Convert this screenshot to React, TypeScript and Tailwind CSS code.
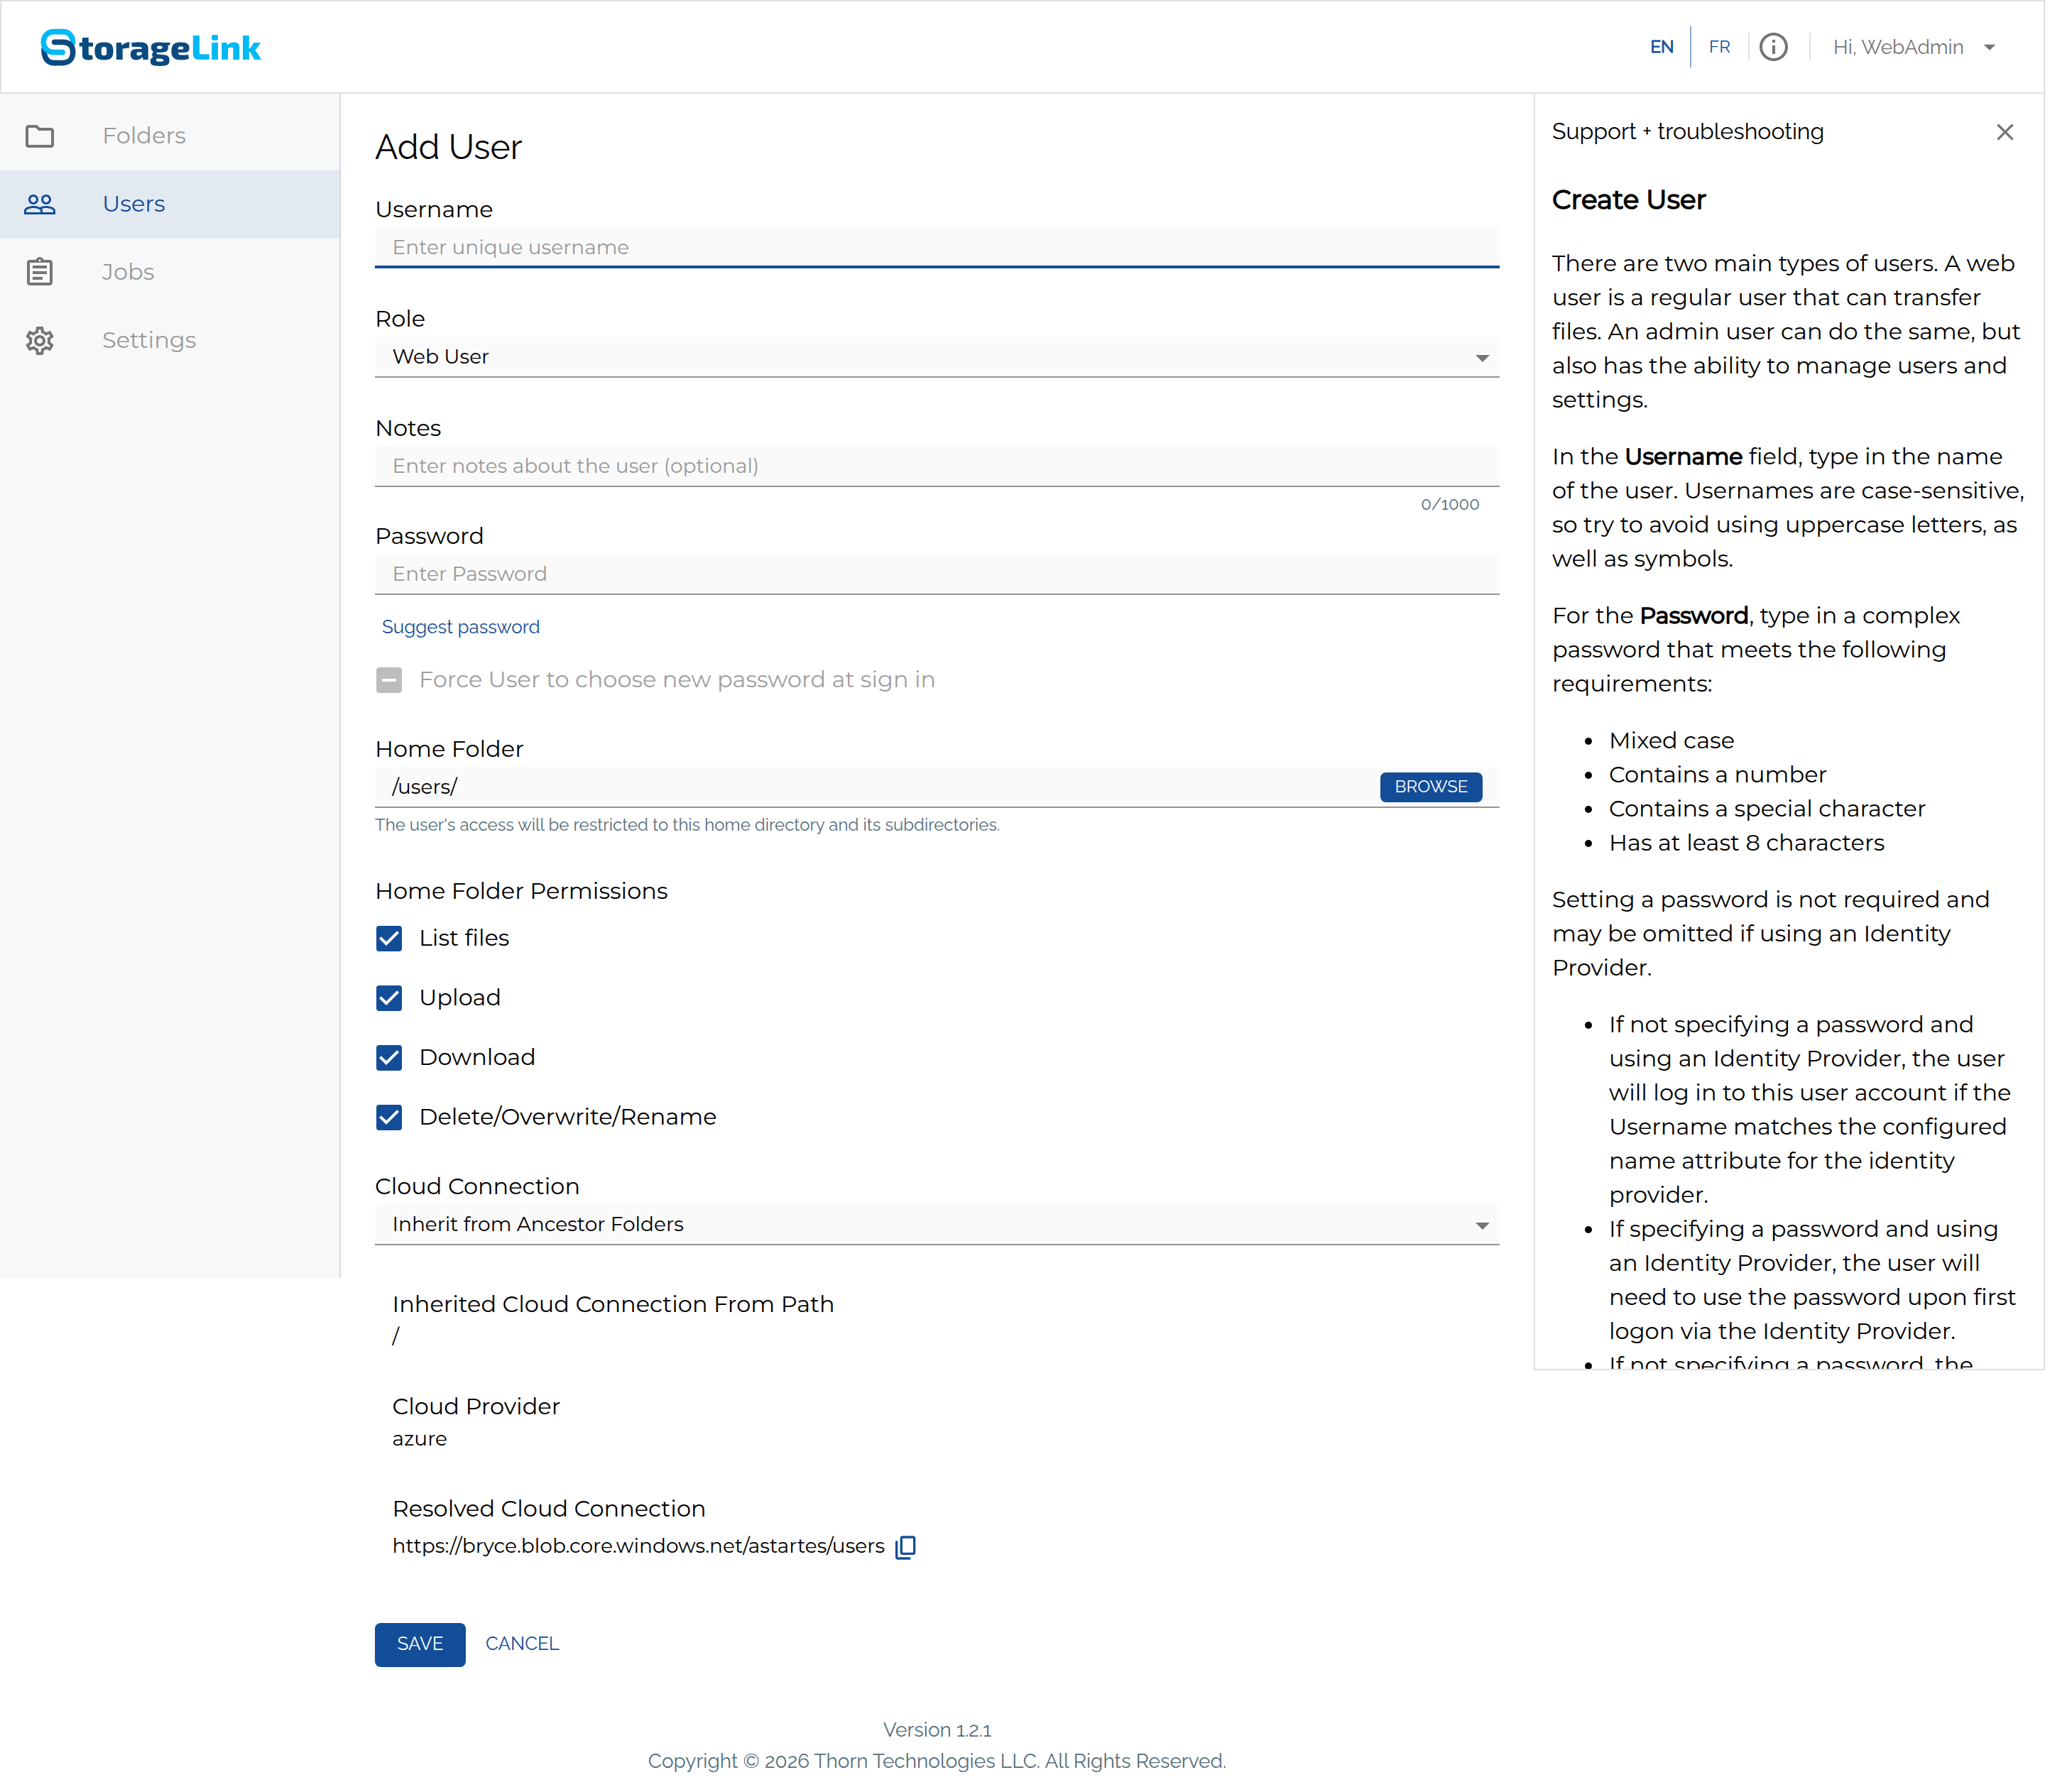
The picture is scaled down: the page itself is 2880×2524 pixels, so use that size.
import React from 'react';
import {
  MdArrowDropDown,
  MdCheckBox,
  MdClose,
  MdIndeterminateCheckBox,
  MdOutlineAssignment,
  MdOutlineFolder,
  MdOutlineInfo,
  MdOutlineSettings,
  MdPeopleOutline,
} from 'react-icons/md';

const Logo: React.FC = () => (
  <svg className="mt-0.5" width="320" height="66" viewBox="0 0 320 66" fill="none">
    <g transform="scale(0.33333)" strokeWidth="23" strokeLinecap="round">
      <path d="M80 164C52 164 36 146 36 108" stroke="#0b4a80" />
      <path
        d="M158 78C158 50 140 32 116 32H78C52 32 34 50 34 76C34 102 52 119 78 119H114"
        stroke="#00b9f5"
      />
      <path d="M80 76H116C142 76 158 92 158 118C158 146 142 164 114 164H80" stroke="#0b4a80" />
    </g>
    <text
      x="61"
      y="50"
      textLength="157"
      lengthAdjust="spacingAndGlyphs"
      className="font-['Exo_2',Inter,sans-serif] text-[48px] font-extrabold"
      fill="#0b4a80"
    >
      torage
    </text>
    <text
      x="219"
      y="50"
      textLength="99"
      lengthAdjust="spacingAndGlyphs"
      className="font-['Exo_2',Inter,sans-serif] text-[48px] font-extrabold"
      fill="#00b9f5"
    >
      Link
    </text>
  </svg>
);

const CopyIcon: React.FC = () => (
  <svg width="40" height="40" viewBox="0 -960 960 960" fill="currentColor">
    <path d="M360-240q-33 0-56.5-23.5T280-320v-480q0-33 23.5-56.5T360-880h360q33 0 56.5 23.5T800-800v480q0 33-23.5 56.5T720-240H360Zm0-80h360v-480H360v480ZM200-80q-33 0-56.5-23.5T120-160v-520q0-17 11.500-28.500T160-720q17 0 28.500 11.500T200-680v520h400q17 0 28.500 11.500T640-120q0 17-11.500 28.500T600-80H200Z" />
  </svg>
);

const Header: React.FC = () => (
  <header className="flex h-[132px] items-center justify-between border-2 border-[#e0e0e0] bg-white pl-12 pr-[56px]">
    <Logo />
    <div className="flex items-center font-['Raleway',Lato,sans-serif] text-[24px] text-[#134d98]">
      <button className="h-[58px] w-[82px] border-r-2 border-[#89a6cc] pl-0.5 [-webkit-text-stroke:1px_#134d98]">
        EN
      </button>
      <button className="h-[58px] w-20">FR</button>
      <div className="h-10 w-0.5 bg-[#e0e0e0]" />
      <MdOutlineInfo className="ml-2.5 mr-[26px] size-12 text-[#757575]" />
      <div className="h-10 w-0.5 bg-[#e0e0e0]" />
      <span className="ml-8 mt-0.5 w-[200px] text-[28px] text-[#757575]">Hi, WebAdmin</span>
      <MdArrowDropDown className="size-10 text-[#757575]" />
    </div>
  </header>
);

const navItems = [
  { label: 'Folders', icon: MdOutlineFolder },
  { label: 'Users', icon: MdPeopleOutline, active: true },
  { label: 'Jobs', icon: MdOutlineAssignment },
  { label: 'Settings', icon: MdOutlineSettings },
];

const Sidebar: React.FC = () => (
  <nav className="h-[1668px] w-[480px] shrink-0 border-r-2 border-[#d9d9d9] bg-[#f7f8fa] pt-3">
    {navItems.map(({ label, icon: Icon, active }) => (
      <div
        key={label}
        className={`flex h-24 items-center gap-16 pl-8 ${active ? 'bg-[#e3e9f1] text-[#134d98]' : 'text-[#9a9a9a]'}`}
      >
        <Icon className={`size-12 ${active ? 'text-[#134d98]' : 'text-[#757575]'}`} />
        <span className="pb-[3px]">{label}</span>
      </div>
    ))}
  </nav>
);

interface FieldProps {
  label: string;
  value?: string;
  placeholder?: string;
  focused?: boolean;
  select?: boolean;
  children?: React.ReactNode;
}

const Field: React.FC<FieldProps> = ({ label, value, placeholder, focused, select, children }) => (
  <div>
    <div className="mb-[5px] pt-px leading-10">{label}</div>
    <div
      className={`flex h-[58px] justify-between rounded-t-lg bg-[#fafafa] pl-[24.5px] text-[28px] leading-[56px] ${
        focused ? 'border-b-4 border-[#134d98]' : 'border-b-2 border-[#949494]'
      }`}
    >
      {value ? <span>{value}</span> : <span className="text-[#999999]">{placeholder}</span>}
      {select && <MdArrowDropDown className="mt-1.5 size-12 text-[#757575]" />}
      {children}
    </div>
  </div>
);

const Check: React.FC<{ label: string }> = ({ label }) => (
  <div className="-ml-1 flex h-12 items-center gap-[18px]">
    <MdCheckBox className="size-12 text-[#134d98]" />
    <span className="pb-[3px]">{label}</span>
  </div>
);

const permissions = ['List files', 'Upload', 'Download', 'Delete/Overwrite/Rename'];

const UserForm: React.FC = () => (
  <main className="w-[1680px] shrink-0 px-12 pt-[39px]">
    <h1 className="mb-[31px] font-['Raleway',Lato,sans-serif] text-[48px] leading-[72px]">Add User</h1>
    <div className="flex flex-col gap-[50px]">
      <Field label="Username" placeholder="Enter unique username" focused />
      <Field label="Role" value="Web User" select />
      <Field label="Notes" placeholder="Enter notes about the user (optional)" />
    </div>
    <div className="my-2.5 pr-7 text-right font-['Raleway',Lato,sans-serif] text-[24px] leading-7 text-[#546e7a]">
      0/1000
    </div>
    <Field label="Password" placeholder="Enter Password" />
    <button className="mt-[25px] block pl-2.5 font-['Raleway',Lato,sans-serif] text-[26px] leading-10 text-[#134d98]">
      Suggest password
    </button>
    <div className="-ml-1 mb-[52px] mt-[31px] flex h-12 items-center gap-[18px] text-[#a0a0a0]">
      <MdIndeterminateCheckBox className="size-12 text-[#bdbdbd]" />
      <span className="pb-[3px]">Force User to choose new password at sign in</span>
    </div>
    <Field label="Home Folder" value="/users/">
      <button className="mr-6 mt-2 h-[42px] w-36 rounded-lg bg-[#134d98] pb-[3px] font-['Raleway',Lato,sans-serif] text-[24px] leading-9 text-white">
        BROWSE
      </button>
    </Field>
    <p className="mt-2 font-['Raleway',Lato,sans-serif] text-[24px] leading-8 text-[#546e7a]">
      The user's access will be restricted to this home directory and its subdirectories.
    </p>
    <div className="mb-[23px] mt-[57px] leading-10">Home Folder Permissions</div>
    <div className="mb-[52px] flex flex-col gap-9">
      {permissions.map((p) => (
        <Check key={p} label={p} />
      ))}
    </div>
    <Field label="Cloud Connection" value="Inherit from Ancestor Folders" select />
    <div className="mt-[63px] flex flex-col gap-[59px] pl-[24.5px] leading-10">
      <div>
        <div className="mb-[5px]">Inherited Cloud Connection From Path</div>
        <div className="text-[28px] leading-10">/</div>
      </div>
      <div>
        <div className="mb-[5px]">Cloud Provider</div>
        <div className="text-[28px] leading-10">azure</div>
      </div>
      <div>
        <div className="mb-3">Resolved Cloud Connection</div>
        <div className="flex h-10 items-center gap-2.5 text-[28px] leading-10">
          https://bryce.blob.core.windows.net/astartes/users
          <span className="mt-1.5 text-[#134d98]">
            <CopyIcon />
          </span>
        </div>
      </div>
    </div>
    <div className="mt-[89px] flex font-['Raleway',Lato,sans-serif] text-[26px] leading-[58px]">
      <button className="h-[62px] w-32 rounded-lg bg-[#134d98] pb-1 text-white">SAVE</button>
      <button className="h-[62px] w-40 pb-1 text-[#134d98]">CANCEL</button>
    </div>
    <footer className="mt-[67px] text-center font-['Raleway',Lato,sans-serif] text-[28px] leading-[44px] text-[#546e7a]">
      <p>Version 1.2.1</p>
      <p>Copyright © 2026 Thorn Technologies LLC. All Rights Reserved.</p>
    </footer>
  </main>
);

const Bold: React.FC<{ children: React.ReactNode }> = ({ children }) => (
  <span className="[-webkit-text-stroke:1.5px_black]">{children}</span>
);

const HelpPanel: React.FC = () => (
  <aside className="h-[1798px] w-[720px] shrink-0 overflow-hidden border-2 border-t-0 border-[#e0e0e0] pl-6 pr-6 pt-[33px]">
    <div className="mb-12 flex h-10 items-center justify-between pr-2.5">
      <span className="font-['Raleway',Lato,sans-serif] leading-10">Support + troubleshooting</span>
      <MdClose className="mt-0.5 size-10 text-[#757575]" />
    </div>
    <h2 className="mb-[38px] text-[37.44px] leading-[56px]">
      <Bold>Create User</Bold>
    </h2>
    <div className="flex flex-col gap-8 leading-[48px]">
      <p>
        There are two main types of users. A web user is a regular user that can transfer files. An admin user can do
        the same, but also has the ability to manage users and settings.
      </p>
      <p>
        In the <Bold>Username</Bold> field, type in the name of the user. Usernames are case-sensitive, so try to avoid
        using uppercase letters, as well as symbols.
      </p>
      <p>
        For the <Bold>Password</Bold>, type in a complex password that meets the following requirements:
      </p>
      <ul className="list-disc pl-[73px]">
        <li className="pl-[7px]">Mixed case</li>
        <li className="pl-[7px]">Contains a number</li>
        <li className="pl-[7px]">Contains a special character</li>
        <li className="pl-[7px]">Has at least 8 characters</li>
      </ul>
      <p>Setting a password is not required and may be omitted if using an Identity Provider.</p>
      <ul className="list-disc pl-[73px]">
        <li className="pl-[7px]">
          If not specifying a password and using an Identity Provider, the user will log in to this user account if the
          Username matches the configured name attribute for the identity provider.
        </li>
        <li className="pl-[7px]">
          If specifying a password and using an Identity Provider, the user will need to use the password upon first
          logon via the Identity Provider.
        </li>
        <li className="pl-[7px]">If not specifying a password, the</li>
      </ul>
    </div>
  </aside>
);

const App: React.FC = () => {
  return (
    <div className="min-h-[2524px] w-[2880px] bg-white font-['Montserrat',Inter,sans-serif] text-[32px] text-black">
      <Header />
      <div className="flex items-start">
        <Sidebar />
        <UserForm />
        <HelpPanel />
      </div>
    </div>
  );
};

export default App;
